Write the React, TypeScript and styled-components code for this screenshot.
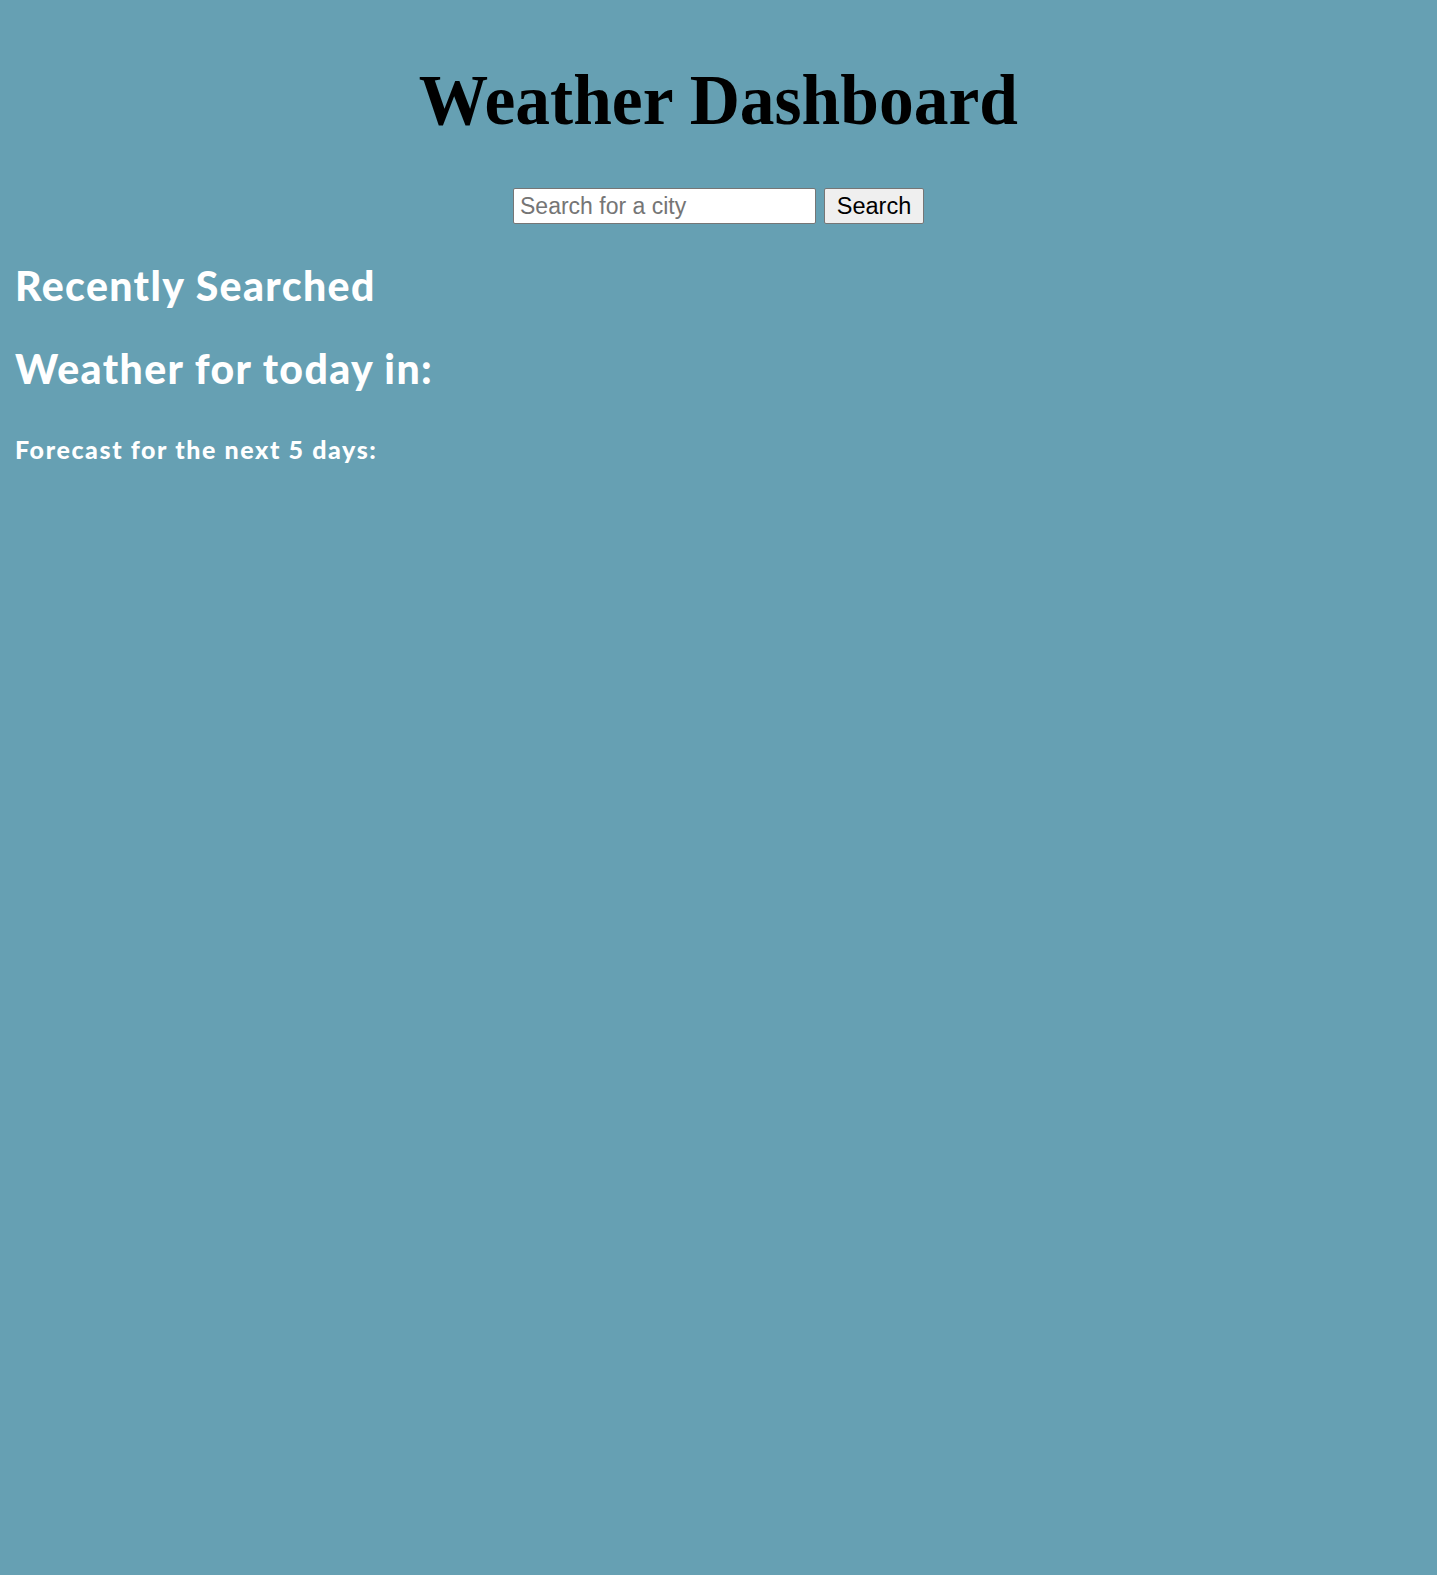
import React from "react";
import styled, { createGlobalStyle } from "styled-components";

const Global = createGlobalStyle`
  html, body { margin: 0; padding: 0; }
  body { background: #66a0b3; min-height: 1575px; }
`;

const Page = styled.div`
  padding: 0 15px;
  min-height: 1575px;
  box-sizing: border-box;
`;

const Header = styled.header`
  display: flex;
  justify-content: center;
  padding-top: 58px;
`;

const Title = styled.h1`
  margin: 0;
  font-family: "Liberation Serif", "Times New Roman", serif;
  font-weight: 700;
  font-size: 72px;
  line-height: 84px;
  color: #000;
  transform: scaleX(0.965);
`;

const SearchRow = styled.form`
  display: flex;
  justify-content: center;
  gap: 8px;
  margin-top: 46px;
`;

const SearchInput = styled.input`
  width: 303px;
  height: 36px;
  box-sizing: border-box;
  border: 1px solid #767676;
  border-radius: 2px;
  padding: 0 6px;
  font-family: "Liberation Sans", Arial, sans-serif;
  font-size: 23px;
  background: #fff;
  &::placeholder { color: #757575; }
`;

const SearchButton = styled.button`
  width: 100px;
  height: 36px;
  box-sizing: border-box;
  border: 1px solid #767676;
  border-radius: 2px;
  background: #efefef;
  font-family: "Liberation Sans", Arial, sans-serif;
  font-size: 23.5px;
  color: #000;
  padding: 0;
`;

const Heading = styled.h2<{ $size: number; $top: number; $spacing: number }>`
  margin: ${(p) => p.$top}px 0 0;
  font-family: "Lato", "Noto Sans", sans-serif;
  font-weight: 900;
  font-size: ${(p) => p.$size}px;
  letter-spacing: ${(p) => p.$spacing}px;
  line-height: 1.2;
  color: #fff;
`;

export default function App() {
  return (
    <>
      <Global />
      <Page>
        <Header>
          <Title>Weather Dashboard</Title>
        </Header>
        <SearchRow onSubmit={(e) => e.preventDefault()}>
          <SearchInput placeholder="Search for a city" />
          <SearchButton type="submit">Search</SearchButton>
        </SearchRow>
        <Heading $size={41} $top={37} $spacing={1.4}>Recently Searched</Heading>
        <Heading $size={41} $top={34} $spacing={1.4}>Weather for today in:</Heading>
        <Heading $size={25} $top={41} $spacing={1.6}>Forecast for the next 5 days:</Heading>
      </Page>
    </>
  );
}
